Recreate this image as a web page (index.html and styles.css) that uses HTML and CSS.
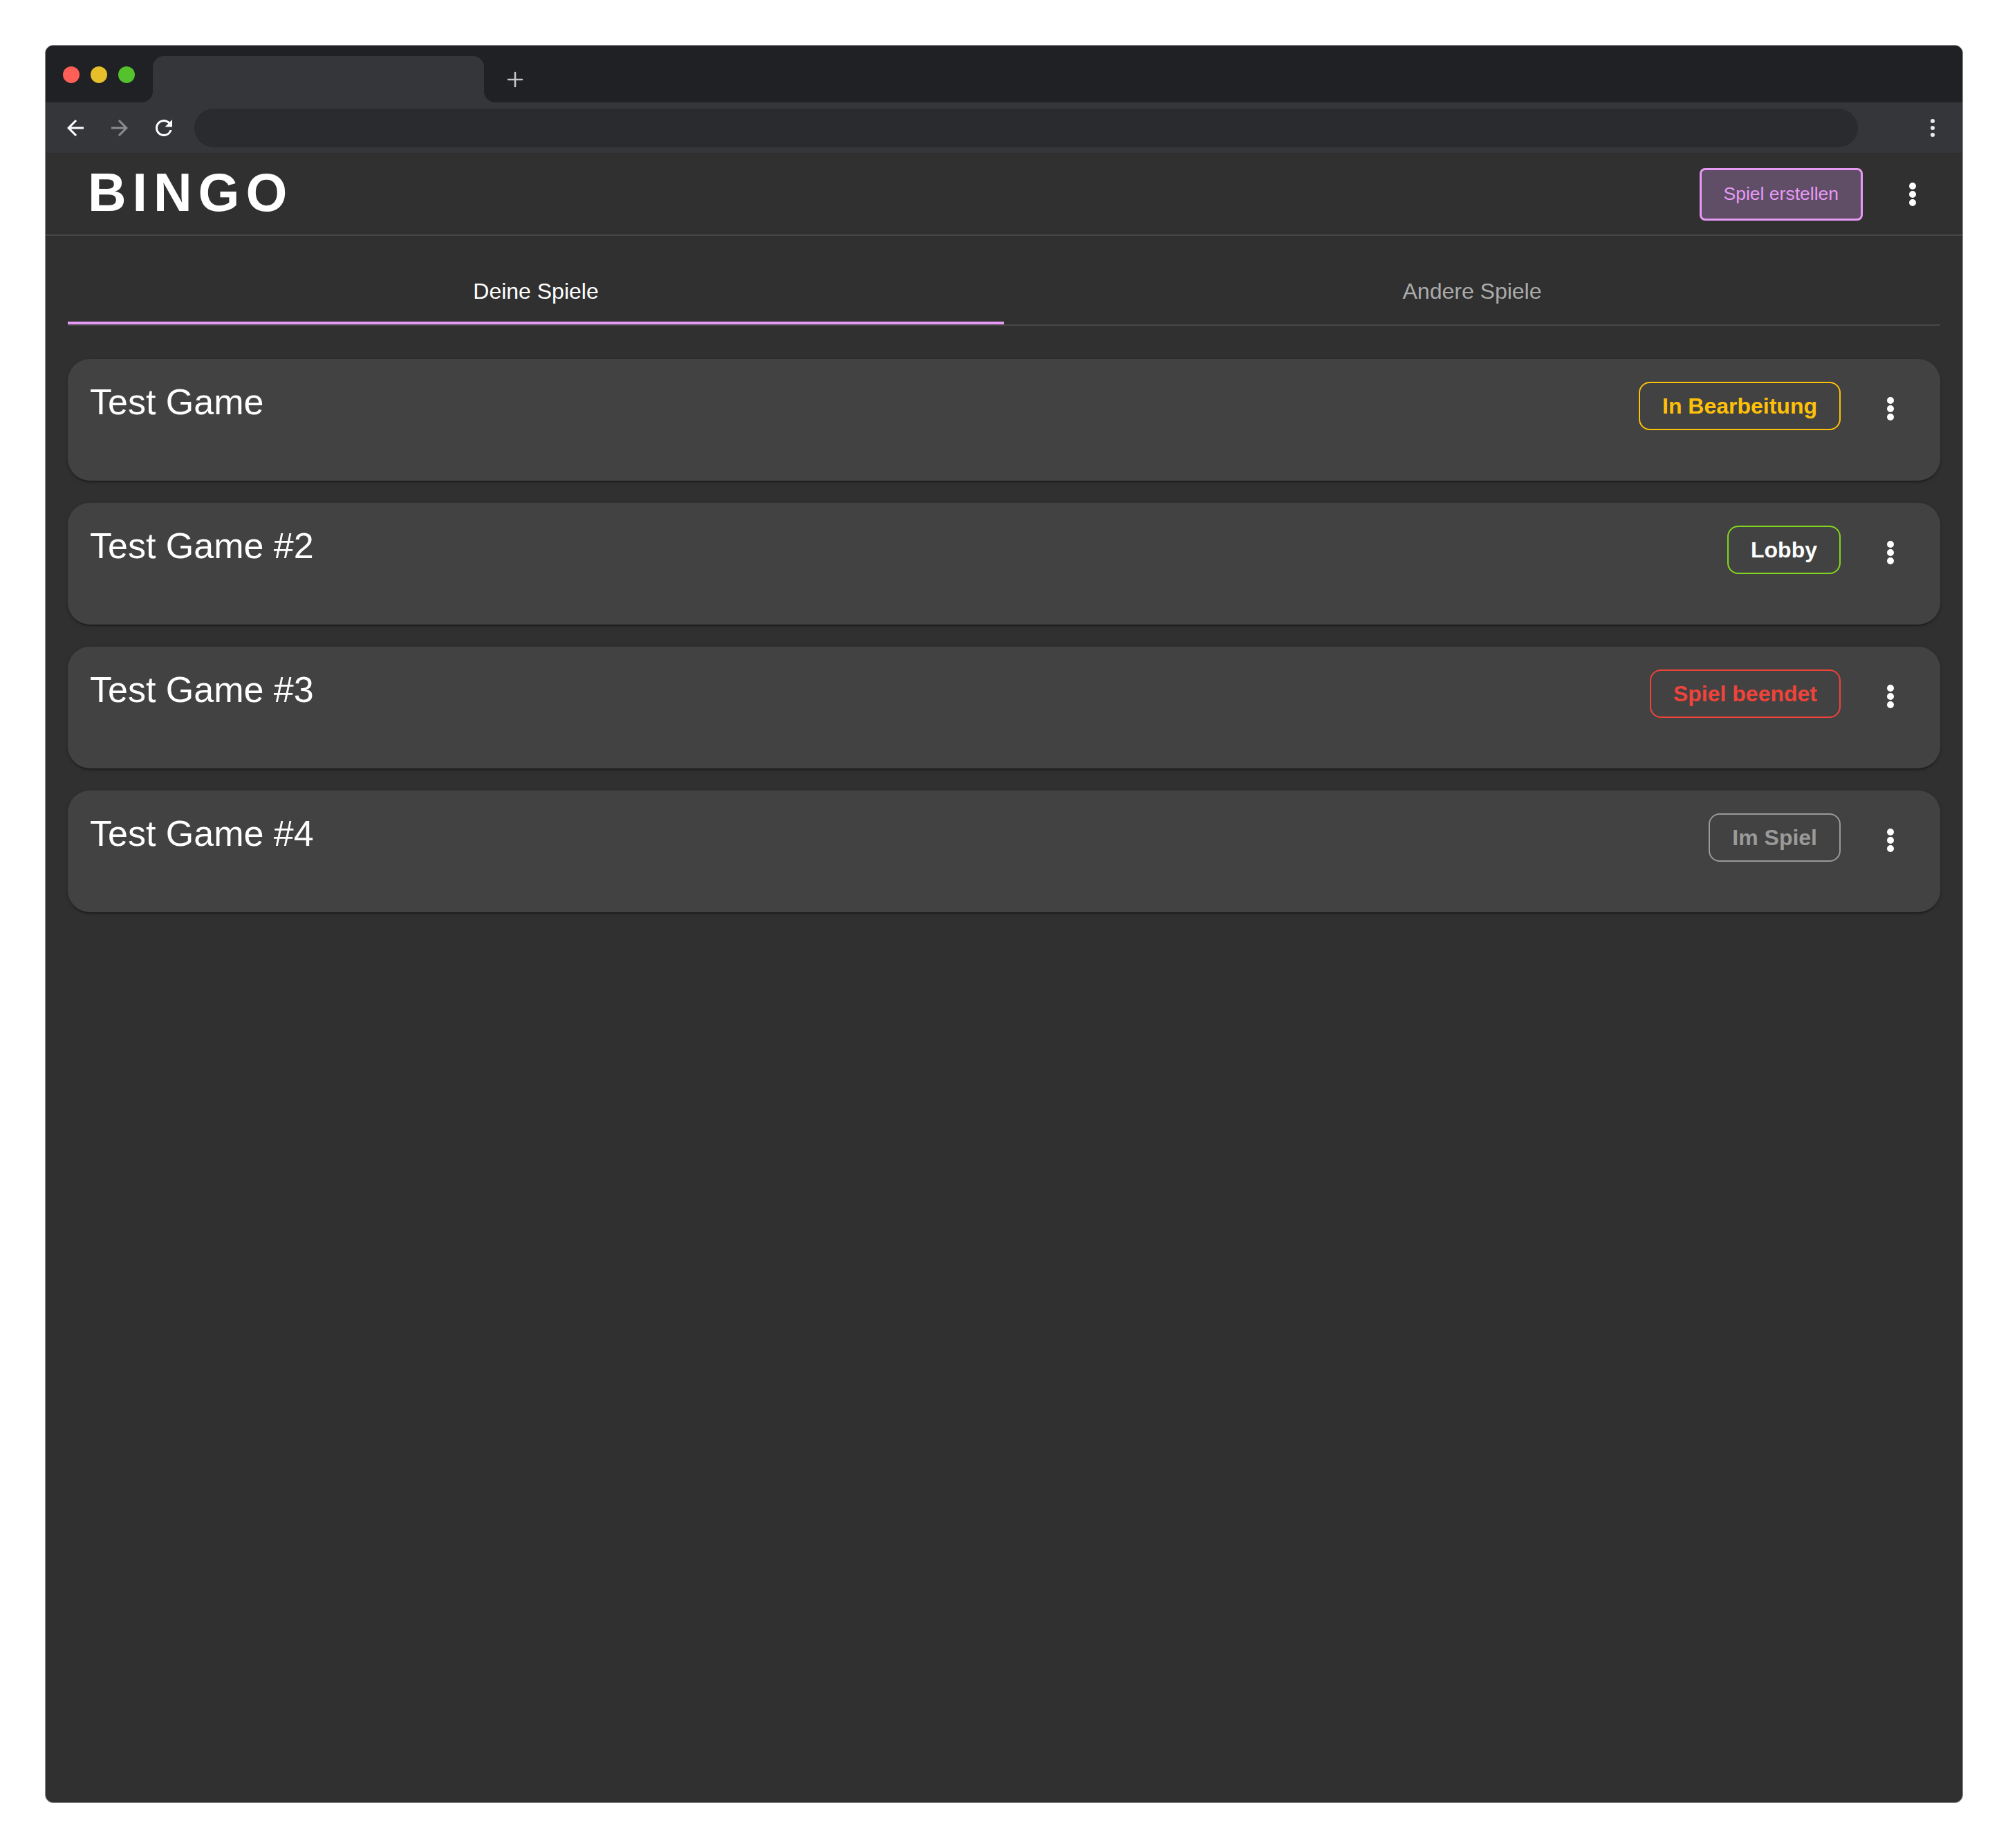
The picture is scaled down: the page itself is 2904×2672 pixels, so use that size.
FILE: index.html
```html
<!DOCTYPE html>
<html lang="de">
<head>
<meta charset="utf-8">
<title>BINGO</title>
<link rel="stylesheet" href="styles.css">
</head>
<body>
<div class="window">
  <div class="tabstrip">
    <div class="lights">
      <span class="light red"></span>
      <span class="light yellow"></span>
      <span class="light green"></span>
    </div>
    <div class="browser-tab"></div>
    <div class="newtab">
      <svg width="24" height="24" viewBox="0 0 24 24"><path d="M12 2v20M2 12h20" stroke="#c4c7c5" stroke-width="2.6" stroke-linecap="round" fill="none"/></svg>
    </div>
  </div>
  <div class="toolbar">
    <div class="navicon">
      <svg width="36" height="36" viewBox="0 0 24 24"><path d="M20 11H7.83l5.59-5.59L12 4l-8 8 8 8 1.41-1.41L7.83 13H20v-2z" fill="#ffffff"/></svg>
    </div>
    <div class="navicon">
      <svg width="36" height="36" viewBox="0 0 24 24"><path d="M4 11h12.17l-5.59-5.59L12 4l8 8-8 8-1.41-1.41L16.17 13H4v-2z" fill="#8a8b8c"/></svg>
    </div>
    <div class="navicon">
      <svg width="36" height="36" viewBox="0 0 24 24"><path d="M17.65 6.35A7.958 7.958 0 0 0 12 4c-4.42 0-7.990 3.58-7.99 8s3.57 8 7.99 8c3.73 0 6.84-2.55 7.73-6h-2.08A5.99 5.99 0 0 1 12 18c-3.31 0-6-2.69-6-6s2.69-6 6-6c1.66 0 3.14.69 4.22 1.78L13 11h7V4l-2.35 2.35z" fill="#ffffff"/></svg>
    </div>
    <div class="omnibox"></div>
    <div class="toolbar-menu">
      <svg width="12" height="32" viewBox="0 0 12 32"><circle cx="6" cy="6" r="3" fill="#e8eaed"/><circle cx="6" cy="16" r="3" fill="#e8eaed"/><circle cx="6" cy="26" r="3" fill="#e8eaed"/></svg>
    </div>
  </div>

  <header class="appbar">
    <div class="logo">BINGO</div>
    <button class="create-btn">Spiel erstellen</button>
    <div class="icon-btn">
      <svg width="48" height="48" viewBox="0 0 48 48"><circle cx="24" cy="12" r="5" fill="#fff"/><circle cx="24" cy="24" r="5" fill="#fff"/><circle cx="24" cy="36" r="5" fill="#fff"/></svg>
    </div>
  </header>

  <main class="content">
    <nav class="tabs">
      <div class="tab active">Deine Spiele</div>
      <div class="tab">Andere Spiele</div>
    </nav>

    <section class="games">
      <div class="card">
        <div class="card-title">Test Game</div>
        <span class="chip chip-edit">In Bearbeitung</span>
        <div class="icon-btn">
          <svg width="48" height="48" viewBox="0 0 48 48"><circle cx="24" cy="12" r="5" fill="#fff"/><circle cx="24" cy="24" r="5" fill="#fff"/><circle cx="24" cy="36" r="5" fill="#fff"/></svg>
        </div>
      </div>
      <div class="card">
        <div class="card-title">Test Game #2</div>
        <span class="chip chip-lobby">Lobby</span>
        <div class="icon-btn">
          <svg width="48" height="48" viewBox="0 0 48 48"><circle cx="24" cy="12" r="5" fill="#fff"/><circle cx="24" cy="24" r="5" fill="#fff"/><circle cx="24" cy="36" r="5" fill="#fff"/></svg>
        </div>
      </div>
      <div class="card">
        <div class="card-title">Test Game #3</div>
        <span class="chip chip-ended">Spiel beendet</span>
        <div class="icon-btn">
          <svg width="48" height="48" viewBox="0 0 48 48"><circle cx="24" cy="12" r="5" fill="#fff"/><circle cx="24" cy="24" r="5" fill="#fff"/><circle cx="24" cy="36" r="5" fill="#fff"/></svg>
        </div>
      </div>
      <div class="card">
        <div class="card-title">Test Game #4</div>
        <span class="chip chip-playing">Im Spiel</span>
        <div class="icon-btn">
          <svg width="48" height="48" viewBox="0 0 48 48"><circle cx="24" cy="12" r="5" fill="#fff"/><circle cx="24" cy="24" r="5" fill="#fff"/><circle cx="24" cy="36" r="5" fill="#fff"/></svg>
        </div>
      </div>
    </section>
  </main>
</div>
</body>
</html>
```

FILE: styles.css
```css
* { box-sizing: border-box; }

html, body {
  margin: 0;
  background: #ffffff;
}

body {
  padding: 65px 0 0 65px;
  font-family: "Liberation Sans", Arial, Helvetica, sans-serif;
}

.window {
  width: 2774px;
  height: 2542px;
  border: 1px solid #8e8e8e;
  border-radius: 12px;
  overflow: hidden;
  background: #303030;
  display: flex;
  flex-direction: column;
}

/* ---------- browser chrome ---------- */
.tabstrip {
  height: 82px;
  background: #202124;
  display: flex;
  align-items: flex-start;
  flex-shrink: 0;
}

.lights {
  display: flex;
  gap: 16px;
  margin: 30px 0 0 25px;
}

.light {
  width: 24px;
  height: 24px;
  border-radius: 50%;
}
.light.red { background: #ff5f57; }
.light.yellow { background: #e6bf2b; }
.light.green { background: #53c22d; }

.browser-tab {
  position: relative;
  width: 479px;
  height: 67px;
  margin: 15px 0 0 26px;
  background: #35363a;
  border-radius: 16px 16px 0 0;
}
.browser-tab::before,
.browser-tab::after {
  content: "";
  position: absolute;
  bottom: 0;
  width: 16px;
  height: 16px;
}
.browser-tab::before {
  left: -16px;
  background: radial-gradient(circle at 0 0, transparent 15.5px, #35363a 16.5px);
}
.browser-tab::after {
  right: -16px;
  background: radial-gradient(circle at 100% 0, transparent 15.5px, #35363a 16.5px);
}

.newtab {
  margin: 37px 0 0 33px;
  width: 24px;
  height: 24px;
}
.newtab svg { display: block; }

.toolbar {
  height: 74px;
  background: #35363a;
  border-bottom: 1px solid #26272a;
  display: flex;
  align-items: center;
  padding: 0 0 0 25px;
  gap: 28px;
  flex-shrink: 0;
}

.navicon {
  width: 36px;
  height: 36px;
}
.navicon svg { display: block; }

.omnibox {
  width: 2406px;
  height: 56px;
  border-radius: 28px;
  background: #292b2e;
  margin-left: -2px;
}

.toolbar-menu {
  margin-left: 74px;
  width: 12px;
  height: 32px;
}
.toolbar-menu svg { display: block; }

/* ---------- app bar ---------- */
.appbar {
  height: 119px;
  flex-shrink: 0;
  border-bottom: 2px solid #464646;
  display: flex;
  align-items: center;
  padding: 0 32px 0 61px;
}

.logo {
  font-size: 77px;
  font-weight: 700;
  letter-spacing: 9px;
  color: #ffffff;
  line-height: 1;
  margin-top: -4px;
  margin-right: auto;
}

.create-btn {
  height: 76px;
  padding: 0 32px;
  border: 3px solid #e79af5;
  border-radius: 8px;
  background: #5f4e66;
  color: #e79af5;
  font-family: "Liberation Sans", Arial, Helvetica, sans-serif;
  font-size: 26.5px;
  line-height: 1;
  margin-right: 32px;
}

.icon-btn {
  width: 80px;
  height: 80px;
  padding: 16px;
  flex-shrink: 0;
}
.icon-btn svg { display: block; }

/* ---------- content ---------- */
.content {
  padding: 32px;
}

.tabs {
  display: grid;
  grid-template-columns: 1fr 1fr;
  border-bottom: 2px solid #474747;
}

.tab {
  height: 96px;
  display: flex;
  align-items: center;
  justify-content: center;
  font-size: 32px;
  color: #ababab;
}

.tab.active {
  color: #ffffff;
  box-shadow: inset 0 -4px 0 #e79af5;
}

.games {
  margin-top: 48px;
  display: flex;
  flex-direction: column;
  gap: 32px;
}

.card {
  height: 176px;
  background: #424242;
  border-radius: 32px;
  padding: 32px;
  display: flex;
  align-items: flex-start;
  gap: 32px;
  box-shadow: 0 4px 2px -2px rgba(0, 0, 0, 0.2), 0 2px 2px 0 rgba(0, 0, 0, 0.14), 0 2px 6px 0 rgba(0, 0, 0, 0.12);
}

.card-title {
  flex: 1;
  font-size: 52px;
  line-height: 60px;
  color: #ffffff;
}

.chip {
  height: 70px;
  padding: 0 32px;
  border: 2px solid;
  border-radius: 16px;
  font-size: 32px;
  font-weight: 700;
  display: flex;
  align-items: center;
  margin-top: 1px;
}

.chip-edit { color: #ffc107; border-color: #ffc107; }
.chip-lobby { color: #ffffff; border-color: #80d71b; }
.chip-ended { color: #f0433a; border-color: #f0433a; }
.chip-playing { color: #9a9a9a; border-color: #9a9a9a; }
```
